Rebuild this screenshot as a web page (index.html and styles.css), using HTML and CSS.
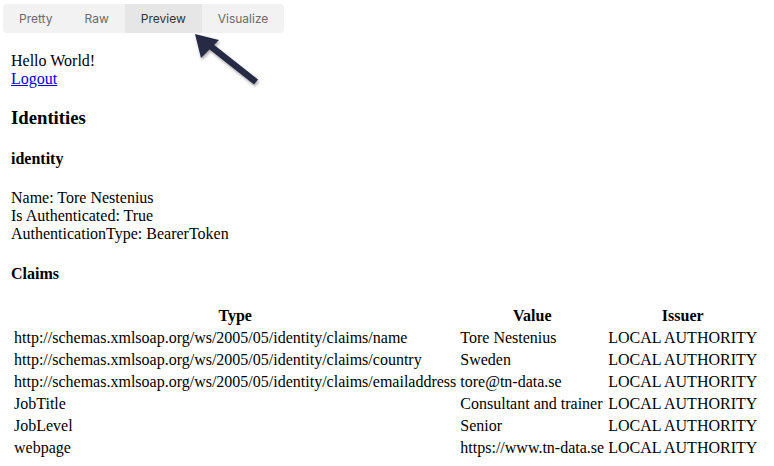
FILE: index.html
```html
<!DOCTYPE html>
<html>
<head>
<meta charset="utf-8">
<link rel="stylesheet" href="styles.css">
</head>
<body>
<div class="app">
  <div class="tabs">
    <div class="tab">Pretty</div>
    <div class="tab">Raw</div>
    <div class="tab active">Preview</div>
    <div class="tab">Visualize</div>
  </div>
  <div class="preview">
    Hello World!<br>
    <a href="#">Logout</a>
    <h3>Identities</h3>
    <h4>identity</h4>
    <p>Name: Tore Nestenius<br>Is Authenticated: True<br>AuthenticationType: BearerToken</p>
    <h4>Claims</h4>
    <table>
      <tr><th>Type</th><th>Value</th><th>Issuer</th></tr>
      <tr><td>http://schemas.xmlsoap.org/ws/2005/05/identity/claims/name</td><td>Tore Nestenius</td><td>LOCAL AUTHORITY</td></tr>
      <tr><td>http://schemas.xmlsoap.org/ws/2005/05/identity/claims/country</td><td>Sweden</td><td>LOCAL AUTHORITY</td></tr>
      <tr><td>http://schemas.xmlsoap.org/ws/2005/05/identity/claims/emailaddress</td><td>tore@tn-data.se</td><td>LOCAL AUTHORITY</td></tr>
      <tr><td>JobTitle</td><td>Consultant and trainer</td><td>LOCAL AUTHORITY</td></tr>
      <tr><td>JobLevel</td><td>Senior</td><td>LOCAL AUTHORITY</td></tr>
      <tr><td>webpage</td><td>https://www.tn-data.se</td><td>LOCAL AUTHORITY</td></tr>
    </table>
  </div>
  <svg class="arrow" width="80" height="70" viewBox="185 25 80 70">
    <defs>
      <filter id="sh" x="-20%" y="-20%" width="160%" height="160%">
        <feDropShadow dx="1" dy="2" stdDeviation="1.5" flood-color="#000" flood-opacity="0.35"/>
      </filter>
    </defs>
    <g filter="url(#sh)" fill="#262c45">
      <line x1="204" y1="41" x2="256" y2="82" stroke="#262c45" stroke-width="6.5" stroke-linecap="butt"/>
      <polygon points="195,34 219,40 201,58"/>
    </g>
  </svg>
</div>
</body>
</html>
```

FILE: styles.css
```css
html, body {
  margin: 0;
  padding: 0;
  background: #fff;
}
.app {
  position: relative;
  padding: 4px 0 0 3px;
}
.tabs {
  display: flex;
  width: 281px;
  height: 29px;
  background: #f2f2f2;
  border-radius: 4px;
  overflow: hidden;
}
.tab {
  display: flex;
  align-items: center;
  padding: 0 16px;
  font-family: Inter, "Noto Sans", sans-serif;
  font-size: 12px;
  color: #6b6b6b;
}
.tab.active {
  background: #e6e6e6;
  color: #333;
}
.preview {
  margin-top: 11px;
  padding: 8px;
  font-family: "Liberation Serif", "Times New Roman", serif;
  font-size: 16px;
  color: #000;
}
.preview a {
  color: #0000ee;
}
.preview h3 {
  font-size: 1.17em;
  margin: 1em 0;
}
.preview h4 {
  font-size: 1em;
  margin: 1.33em 0;
}
.preview p {
  margin: 1em 0;
}
.preview table {
  border-spacing: 2px;
  margin-top: 0;
}
.preview td, .preview th {
  padding: 1px;
  text-align: left;
}
.preview th {
  text-align: center;
}
.arrow {
  position: absolute;
  left: 185px;
  top: 25px;
}
```
